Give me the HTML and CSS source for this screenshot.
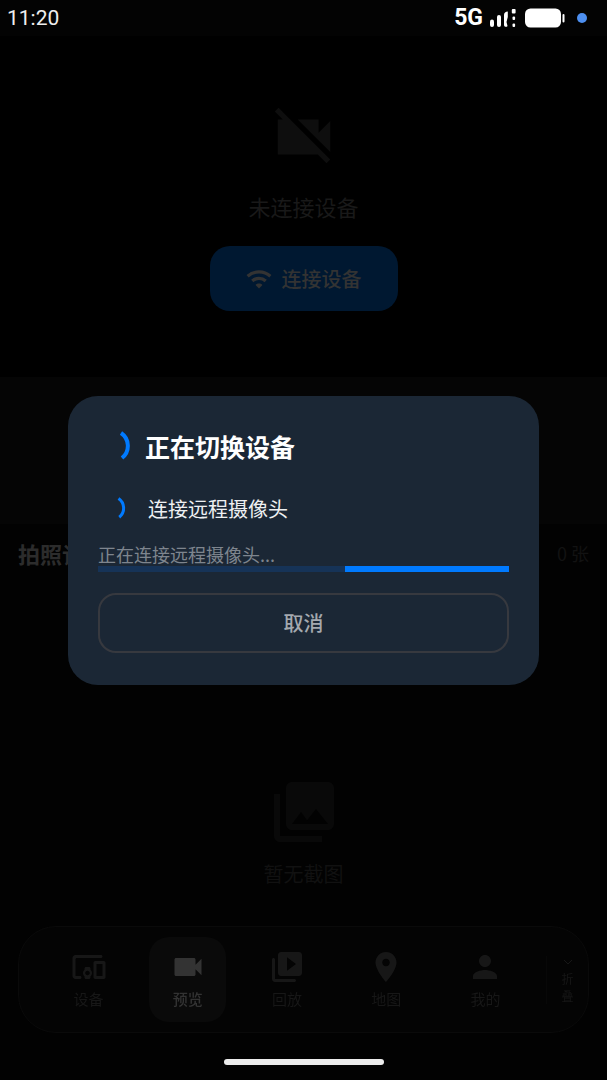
FILE: index.html
```html
<!DOCTYPE html>
<html lang="zh-CN">
<head>
    <meta charset="UTF-8">
    <meta name="viewport" content="width=device-width, initial-scale=1.0">
    <title>预览</title>
    <link rel="stylesheet" href="styles.css">
</head>
<body>
    <div class="status-bar">
        <span class="time">11:20</span>
        <div class="status-icons">
            <span class="network">5G</span>
            <svg class="signal" viewBox="0 0 28 20">
                <rect x="1" y="11.500" width="4" height="7.500" rx="2"/>
                <rect x="8" y="7" width="4" height="12" rx="2"/>
                <path d="M18.800 3.500c-2.300 0-3.800 1.500-3.800 3.500v10c0 2 3 2.500 3.500 1l-1-4 1.300-5z"/>
                <rect x="22.800" y="1" width="3.800" height="4.500" rx="1"/>
                <rect x="23.500" y="8.500" width="2.600" height="3.500" rx="1"/>
                <rect x="23.500" y="15.500" width="2.600" height="3.500" rx="1"/>
            </svg>
            <svg class="battery" viewBox="0 0 40 20">
                <rect x="0" y="0.500" width="36" height="19" rx="5.500"/>
                <rect x="37.500" y="6" width="2" height="8.500" rx="1"/>
            </svg>
            <span class="privacy-dot"></span>
        </div>
    </div>

    <section class="preview">
        <svg class="preview-icon" viewBox="0 0 24 24"><path d="M21 6.500l-4 4V6H9.820L21 17.180V6.500zM3.270 2L2 3.270 4.730 6H3v12h13.730L19.730 21 21 19.730 3.270 2z"/></svg>
        <p class="preview-text">未连接设备</p>
        <button type="button" class="btn-connect">
            <svg class="wifi" viewBox="0 0 24 24">
                <path d="M1.500 9.500c5.800-5.300 15.200-5.300 21 0M5.800 13.800c3.500-3.200 8.900-3.200 12.400 0"/>
                <path class="wifi-dot" d="M8.800 17.500c1.800-1.700 4.600-1.700 6.400 0l-3.200 3.300z"/>
            </svg>
            <span>连接设备</span>
        </button>
    </section>

    <section class="controls"></section>

    <section class="gallery">
        <div class="gallery-header">
            <h2>拍照记录</h2>
            <span class="count">0 张</span>
        </div>
        <div class="empty">
            <svg class="empty-icon" viewBox="0 0 24 24"><path d="M22 16V4c0-1.100-.9-2-2-2H8c-1.100 0-2 .9-2 2v12c0 1.100.9 2 2 2h12c1.100 0 2-.9 2-2zm-11-4l2.030 2.710L16 11l4 5H8l3-4zM2 6v14c0 1.100.9 2 2 2h14v-2H4V6H2z"/></svg>
            <p>暂无截图</p>
        </div>
    </section>

    <nav class="tab-bar">
        <div class="tabs">
            <button type="button" class="tab">
                <svg viewBox="0 0 24 24"><path d="M3 7c0-.55.45-1 1-1h16c.55 0 1-.45 1-1s-.45-1-1-1H3c-1.100 0-2 .9-2 2v12c0 1.100.9 2 2 2h3c.55 0 1-.45 1-1s-.45-1-1-1H3V7zm9 5h-2c-.55 0-1 .45-1 1v.780c-.61.55-1 1.330-1 2.220s.39 1.670 1 2.220V19c0 .55.45 1 1 1h2c.55 0 1-.45 1-1v-.780c.61-.55 1-1.340 1-2.220s-.39-1.670-1-2.220V13c0-.55-.45-1-1-1zm-1 5.500c-.83 0-1.500-.67-1.500-1.500s.67-1.500 1.500-1.500 1.500.67 1.500 1.500-.67 1.500-1.500 1.500zM22 8h-6c-.5 0-1 .5-1 1v10c0 .5.5 1 1 1h6c.5 0 1-.5 1-1V9c0-.5-.5-1-1-1zm-1 10h-4v-8h4v8z"/></svg>
                <span>设备</span>
            </button>
            <button type="button" class="tab active">
                <svg viewBox="0 0 24 24"><path d="M17 10.500V7c0-.55-.45-1-1-1H4c-.55 0-1 .45-1 1v10c0 .55.45 1 1 1h12c.55 0 1-.45 1-1v-3.500l4 4v-11l-4 4z"/></svg>
                <span>预览</span>
            </button>
            <button type="button" class="tab">
                <svg viewBox="0 0 24 24"><path d="M3 6c-.55 0-1 .45-1 1v13c0 1.100.9 2 2 2h13c.55 0 1-.45 1-1s-.45-1-1-1H4V7c0-.55-.45-1-1-1zm17-4H8c-1.100 0-2 .9-2 2v12c0 1.100.9 2 2 2h12c1.100 0 2-.9 2-2V4c0-1.100-.9-2-2-2zm-8 12.500v-9l6 4.500-6 4.500z"/></svg>
                <span>回放</span>
            </button>
            <button type="button" class="tab">
                <svg viewBox="0 0 24 24"><path d="M12 2C8.130 2 5 5.130 5 9c0 5.250 7 13 7 13s7-7.750 7-13c0-3.870-3.130-7-7-7zm0 9.500c-1.380 0-2.500-1.120-2.500-2.500s1.120-2.500 2.500-2.500 2.500 1.120 2.500 2.500-1.120 2.500-2.500 2.500z"/></svg>
                <span>地图</span>
            </button>
            <button type="button" class="tab">
                <svg viewBox="0 0 24 24"><path d="M12 12c2.210 0 4-1.790 4-4s-1.790-4-4-4-4 1.790-4 4 1.790 4 4 4zm0 2c-2.670 0-8 1.340-8 4v2h16v-2c0-2.660-5.330-4-8-4z"/></svg>
                <span>我的</span>
            </button>
        </div>
        <button type="button" class="fold">
            <svg viewBox="0 0 12 12"><path d="M2 4l4 4 4-4"/></svg>
            <span>折</span>
            <span>叠</span>
        </button>
    </nav>
    <div class="home-indicator"></div>

    <div class="overlay">
        <div class="dialog" role="dialog" aria-labelledby="dialogTitle">
            <div class="dialog-title">
                <svg class="spinner" viewBox="0 0 32 32"><path d="M23 3A15.500 15.500 0 0 1 24 28"/></svg>
                <h1 id="dialogTitle">正在切换设备</h1>
            </div>
            <div class="dialog-step">
                <svg class="spinner" viewBox="0 0 32 32"><path d="M22 2A15.500 15.500 0 0 1 23 27"/></svg>
                <span>连接远程摄像头</span>
            </div>
            <p class="dialog-message">正在连接远程摄像头...</p>
            <div class="progress" role="progressbar" aria-label="连接进度">
                <div class="progress-value"></div>
            </div>
            <button type="button" class="btn-cancel">取消</button>
        </div>
    </div>
</body>
</html>
```
FILE: styles.css
```css
* {
    margin: 0;
    padding: 0;
    box-sizing: border-box;
}

body {
    display: flex;
    flex-direction: column;
    min-height: 100vh;
    font-family: "Noto Sans CJK SC", sans-serif;
    background: #020202;
    color: #171717;
}

button {
    font-family: inherit;
    color: inherit;
    background: none;
    border: none;
    cursor: pointer;
}

svg {
    display: block;
    flex: none;
    fill: currentColor;
}

/* status bar */
.status-bar {
    display: flex;
    align-items: center;
    justify-content: space-between;
    height: 36px;
    padding: 0 20px 1px 7px;
    font-family: Roboto, sans-serif;
    background: #030303;
    color: #fff;
}

.time {
    font-size: 21px;
    line-height: 24px;
    color: #eee;
}

.status-icons {
    display: flex;
    align-items: center;
}

.network {
    margin-right: 6px;
    font-size: 23px;
    font-weight: 700;
    line-height: 24px;
}

.signal {
    width: 28px;
    height: 20px;
    margin-right: 8px;
}

.battery {
    width: 40px;
    height: 20px;
    margin-right: 12px;
}

.privacy-dot {
    width: 10px;
    height: 10px;
    border-radius: 50%;
    background: #4d8ff0;
}

/* preview */
.preview {
    display: flex;
    flex-direction: column;
    align-items: center;
    justify-content: center;
    height: 341px;
    background: #000;
}

.preview-icon {
    width: 70px;
    height: 70px;
    color: #0e0e0e;
}

.preview-text {
    margin: 18px 0 24px;
    font-size: 22px;
    line-height: 32px;
    color: #191919;
}

.btn-connect {
    display: flex;
    align-items: center;
    gap: 10px;
    height: 65px;
    padding: 0 36px;
    border-radius: 20px;
    background: #001831;
    color: #333;
    font-size: 20px;
    font-weight: 500;
}

.wifi {
    width: 26px;
    height: 26px;
    fill: none;
    stroke: currentColor;
    stroke-width: 3;
}

.wifi-dot {
    fill: currentColor;
    stroke: none;
}

.controls {
    height: 147px;
    background: #050505;
}

/* gallery */
.gallery {
    flex: 1;
    display: flex;
    flex-direction: column;
    padding-top: 11px;
}

.gallery-header {
    display: flex;
    align-items: center;
    justify-content: space-between;
    padding: 0 18px;
    margin-bottom: 12px;
    line-height: 36px;
}

.gallery-header h2 {
    font-size: 22px;
    font-weight: 700;
    color: #2c2c2c;
}

.count {
    font-size: 18px;
    color: #121212;
}

.empty {
    flex: 1;
    display: flex;
    flex-direction: column;
    align-items: center;
    justify-content: center;
    gap: 12px;
    font-size: 20px;
    line-height: 28px;
    color: #111;
}

.empty-icon {
    width: 72px;
    height: 72px;
    color: #090909;
}

/* bottom tabs */
.tab-bar {
    position: fixed;
    left: 18px;
    right: 18px;
    bottom: 47px;
    display: flex;
    align-items: center;
    padding: 10px 0 10px 20px;
    border: 1px solid #0a0a0a;
    border-radius: 38px;
    background: #040404;
}

.tabs {
    flex: 1;
    display: flex;
    margin-right: 11px;
}

.tab {
    flex: 1;
    display: flex;
    flex-direction: column;
    align-items: center;
    gap: 3px;
    margin: 0 11px;
    padding: 12px 0;
    border-radius: 20px;
    font-size: 15px;
    line-height: 22px;
}

.tab svg {
    width: 36px;
    height: 36px;
}

.tab.active {
    background: #0a0a0a;
    color: #333;
    font-weight: 500;
}

.fold {
    display: flex;
    flex-direction: column;
    align-items: center;
    width: 42px;
    border-left: 1px solid #080808;
    font-size: 12px;
    line-height: 17px;
}

.fold svg {
    width: 12px;
    height: 12px;
    margin-bottom: 2px;
    fill: none;
    stroke: currentColor;
}

.home-indicator {
    position: fixed;
    left: 50%;
    bottom: 15px;
    width: 160px;
    height: 6px;
    margin-left: -80px;
    border-radius: 3px;
    background: #ececec;
}

/* switching dialog */
.overlay {
    position: fixed;
    inset: 0;
    display: flex;
    align-items: center;
    justify-content: center;
    padding: 0 68px;
}

.dialog {
    width: 100%;
    padding: 30px;
    border-radius: 30px;
    background: #1b2735;
    color: #fff;
}

.dialog-title {
    display: flex;
    align-items: center;
    gap: 15px;
    margin-bottom: 28px;
}

.dialog-title h1 {
    font-size: 25px;
    font-weight: 700;
    line-height: 40px;
}

.spinner {
    width: 32px;
    height: 32px;
    fill: none;
    stroke: #007aff;
    stroke-width: 4;
}

.dialog-step {
    display: flex;
    align-items: center;
    gap: 22px;
    margin-bottom: 18px;
    padding-left: 4px;
    font-size: 20px;
    line-height: 30px;
    color: #eef0f2;
}

.dialog-step .spinner {
    width: 24px;
    height: 24px;
}

.dialog-message {
    font-size: 18px;
    line-height: 24px;
    color: #7e858e;
}

.progress {
    height: 6px;
    margin-bottom: 21px;
    background: #163357;
}

.progress-value {
    width: 40%;
    height: 100%;
    margin-left: auto;
    background: #007aff;
}

.btn-cancel {
    display: block;
    width: 100%;
    height: 60px;
    margin-bottom: 2px;
    border: 2px solid #37393f;
    border-radius: 18px;
    font-size: 20px;
    font-weight: 500;
    color: #a4a9af;
}
```
